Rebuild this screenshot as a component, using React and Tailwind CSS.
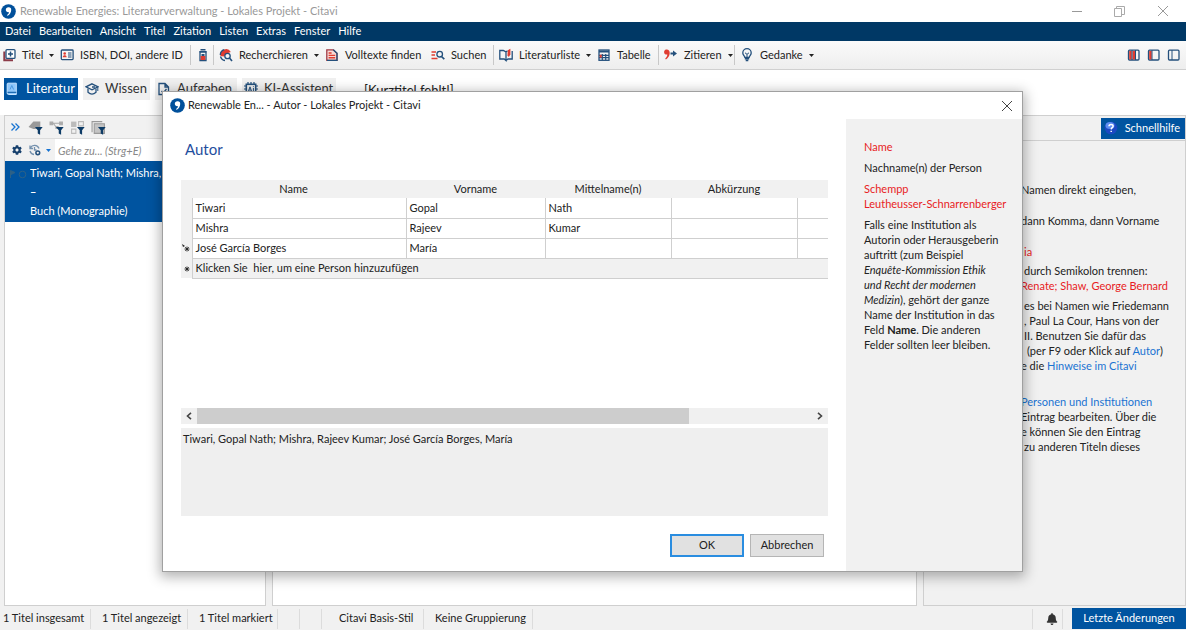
import React from "react";
import { FaBell, FaCog } from "react-icons/fa";

const NAVY = "#24507c";
const RED = "#e03c31";

const CitaviLogo = () => (
  <svg width="15" height="15" viewBox="0 0 15 15" aria-hidden="true">
    <circle cx="7.5" cy="7.5" r="7.3" fill="#00509b" />
    <path d="M7.4 3.2a2.6 2.6 0 0 1 2.8 2.7c0 2.6-1.5 4.8-3.8 5.9l-.5-.8c1.3-.8 2-1.6 2.2-2.8-1.9.4-3.3-.8-3.3-2.4 0-1.5 1.1-2.6 2.6-2.6z" fill="#fff" />
  </svg>
);

const Icon = ({ children, size = 14 }) => (
  <svg
    width={size}
    height={size}
    viewBox="0 0 14 14"
    fill="none"
    stroke={NAVY}
    strokeWidth="1.3"
    className="shrink-0"
    aria-hidden="true"
  >
    {children}
  </svg>
);

const AddTitleIcon = () => (
  <Icon>
    <path d="M2.3 3.5v8.7h8.7" stroke="#8c3b48" strokeWidth="2" />
    <rect x="4" y="1.6" width="9" height="8.8" rx="1" fill="#fff" />
    <path d="M8.5 3.5v5M6 6h5" strokeWidth="1.5" />
  </Icon>
);

const IdCardIcon = () => (
  <Icon>
    <rect x="1.3" y="2" width="11.8" height="9.6" rx="0.8" />
    <circle cx="4.7" cy="5.5" r="1.3" fill={RED} stroke="none" />
    <path d="M2.8 9.3c0-2.6 3.8-2.6 3.8 0z" fill={RED} stroke="none" />
    <path d="M8 5h3.5M8 7h3.5M8 9h3.5" strokeWidth="1.1" />
  </Icon>
);

const PickerIcon = () => (
  <Icon>
    <path d="M4.5 1.8h5M3.5 3.7h7" strokeWidth="1.6" />
    <path d="M4 4v8.5h6V4z" fill="#f4f4f4" />
    <path d="M4.7 8h4.6v4H4.7z" fill={RED} stroke="none" />
    <path d="M5.5 6h3v2h-3z" fill={NAVY} stroke="none" />
  </Icon>
);

const ResearchIcon = () => (
  <Icon>
    <path d="M1.5 8A5.6 5.6 0 0 1 11.8 4L8 5.5 5 8.5z" fill={RED} stroke="none" />
    <path d="M1.3 7a5.6 5.6 0 0 1 4-5.3M1.5 8.5a5.5 5.5 0 0 0 4.5 4" />
    <circle cx="8.5" cy="8" r="2.7" fill="#f4f4f4" />
    <path d="M10.5 10l2.5 3" strokeWidth="1.6" />
  </Icon>
);

const FullTextIcon = () => (
  <Icon>
    <path d="M1.8 1.8h6.5l3.7 3.5v7H1.8z" fill="#f7d9d6" stroke="#a03a44" />
    <path d="M8.3 1.8l3.7 3.5v7H2" />
    <path d="M3.6 5h3M3.6 7.4h6.6M3.6 9.8h6.6" stroke={RED} strokeWidth="1.4" />
  </Icon>
);

const SearchIcon = () => (
  <Icon>
    <path d="M.5 4h4.5M.5 7h3.5M.5 10.5h6" stroke={RED} />
    <circle cx="8.7" cy="6.2" r="2.8" />
    <path d="M10.5 8.5l2.8 2.7" strokeWidth="1.7" />
  </Icon>
);

const BookIcon = () => (
  <Icon>
    <path d="M.8 2.5h3.5L7 4v8.5L5.2 11H.8zM7 4l1.5-1.2M13.2 3v8H9L7 12.5" />
    <path d="M8.8 2.2l2.6-1.4v5.7L9.8 9 8.5 7.5z" fill={RED} stroke="none" />
  </Icon>
);

const TableIcon = () => (
  <Icon>
    <rect x="2" y="2" width="10" height="10.3" />
    <path d="M2 3.5h10" strokeWidth="2" />
    <path d="M2 7.3h10M2 9.7h10M5.3 6v6M8.7 6v6" strokeWidth="1.2" />
    <path d="M2.7 6.7h2v3h-2z" fill={RED} stroke="none" />
  </Icon>
);

const CiteIcon = () => (
  <Icon>
    <path d="M1.3 1.8c2.8-.8 4.6.8 4.4 3.4-.2 2.7-1.5 4.8-3.8 6.2l-.7-1C2.7 9.3 3.3 8 3.3 6.5 1.5 6.8.1 5.8.1 4.2c0-1.2.5-2 1.2-2.4z" fill={RED} stroke="none" />
    <path d="M6.5 5.5h4" strokeWidth="2" />
    <path d="M9 2.5l4 3-4 3z" fill={NAVY} stroke="none" />
  </Icon>
);

const IdeaIcon = () => (
  <Icon>
    <path d="M4.8 9.3C4.5 7.8 2.8 7 2.8 4.9a4.2 4.2 0 0 1 8.4 0c0 2.1-1.7 2.9-2 4.4z" />
    <path d="M5 4.8l2 1.5 2-1.5M7 6.3v3" strokeWidth="1" />
    <path d="M4.8 10.8h4.4M5.7 12.5h2.6" strokeWidth="1.5" />
  </Icon>
);

// fill: number of red columns on the left side of the layout preview
const LayoutIcon = ({ fill }) => (
  <Icon>
    <rect x="1.5" y="2.2" width="10.5" height="9.8" rx="1" />
    {fill > 0 && <path d="M2.2 2.9h2.5v8.5H2.2z" fill={RED} stroke="none" />}
    {fill > 1 && <path d="M5.5 2.9h2.5v8.5H5.5z" fill={RED} stroke="none" />}
    <path d="M5 2v10" strokeWidth="1" />
    {fill > 1 && <path d="M8.5 2v10" strokeWidth="1" />}
  </Icon>
);

const Funnel = () => (
  <path d="M6.5 6.5h7.2l-2.4 3v4.3l-2.2-1.3v-3z" fill="#0d3b66" stroke="none" />
);

const filterIcons = [
  {
    label: "Schlagwortfilter",
    art: <path d="M.5 6.5L5 1.5h6.5v7H5z" fill="#9a9a9a" stroke="none" />,
  },
  {
    label: "Kategorienfilter",
    art: (
      <g fill="#aaa" stroke="#aaa" strokeWidth="1">
        <path d="M1 2h2.5v2.5H1zM10 2h2.5v2.5H10zM6.5 6h2v2h-2z" />
        <path d="M3 3h7M4 3l3 4" fill="none" />
      </g>
    ),
  },
  {
    label: "Gruppenfilter",
    art: (
      <g stroke="#bbb" strokeWidth="1">
        <path d="M8 1.5h4.5v4H8zM1.5 8.5h4v4h-4z" />
        <path d="M1 1.5h5v5H1z" fill="#bbb" stroke="none" />
      </g>
    ),
  },
  {
    label: "Dokumentfilter",
    art: (
      <g stroke="#999" strokeWidth="1">
        <path d="M1 11.5V1.5h9.5" />
        <path d="M3 3.5h9.5v9H3z" fill="#c4c4c4" />
      </g>
    ),
  },
];

const LiteratureTabIcon = () => (
  <Icon>
    <path d="M3 1.2h7.3v11.3H2.5A1.4 1.4 0 0 1 1.2 11V2A.8.8 0 0 1 2 1.2z" fill="#8fc7fa" stroke="#c7e4ff" strokeWidth="1" />
    <path d="M1.5 10.3h8.8" stroke="#0054a0" strokeWidth="1" />
    <path d="M4 7.5l1.8-4 1.8 4" stroke="#4b9ae0" strokeWidth="1" />
  </Icon>
);

const KnowledgeIcon = () => (
  <Icon>
    <path d="M7 1.8l6 3-6 3-6-3z" />
    <path d="M3 6.5v3.8c2.5 2.2 5.5 2.2 8 0V6.5M7 5h3" />
    <path d="M12.8 5v4" strokeWidth="1" />
  </Icon>
);

const TaskIcon = () => (
  <Icon>
    <path d="M2 1.5h6l3.5 3.5v7.5H2zM8 1.5V5h3.5" />
    <path d="M4.5 9l1.8 1.8L9.5 7" />
  </Icon>
);

const AiIcon = () => (
  <Icon>
    <rect x="2.3" y="2.3" width="9.4" height="9.4" strokeWidth="1.6" />
    <path d="M4 0v2M7 0v2M10 0v2M0 4h2M0 7h2M0 10h2M12 4h2M12 7h2M12 10h2M4 12v2M7 12v2M10 12v2" strokeWidth="1.2" />
    <path d="M4.3 9.5L6 4.8l1.7 4.7M5 8h2M9.4 6v3.5M9.4 4.3v.8" strokeWidth="1" />
  </Icon>
);

const HistoryIcon = () => (
  <Icon>
    <path d="M2 2.5v3h3M2.3 5a4.8 4.8 0 0 1 8.7.5M2 8a4.8 4.8 0 0 0 4 3.5M6.5 4v3h2" stroke="#7390ad" />
    <circle cx="9.8" cy="9.8" r="1.9" stroke={NAVY} strokeWidth="1.5" />
  </Icon>
);

const HelpIcon = () => (
  <svg width="14" height="14" viewBox="0 0 14 14" aria-hidden="true">
    <circle cx="7" cy="7" r="6.3" fill="#1c49c2" />
    <ellipse cx="6" cy="4.5" rx="4.5" ry="3.5" fill="#5b8cf0" />
    <path d="M5 5.3C5 2.7 9.2 2.8 9.1 5.2 9 6.7 7.3 6.7 7.2 8.4M7.2 9.8v1.3" fill="none" stroke="#fff" strokeWidth="1.5" />
  </svg>
);

const CloseIcon = () => (
  <svg width="12" height="12" viewBox="0 0 12 12" aria-hidden="true">
    <path d="M1 1l10 10M11 1L1 11" stroke="currentColor" fill="none" />
  </svg>
);

const Caret = ({ color = "#222" }) => (
  <svg width="5" height="3" viewBox="0 0 5 3" className="shrink-0" aria-hidden="true">
    <path d="M0 0h5L2.5 3z" fill={color} />
  </svg>
);

const RowMarker = ({ editing }) => (
  <svg width="9" height="9" viewBox="0 0 9 9" className="mx-auto" aria-hidden="true">
    <path d="M5 2.5v5M2.5 5h5M3.2 3.2l3.6 3.6M6.8 3.2L3.2 6.8" stroke="#222" strokeWidth="0.9" />
    {editing && <path d="M0 0l3 2-2 1z" fill="#222" />}
  </svg>
);

const menus = ["Datei", "Bearbeiten", "Ansicht", "Titel", "Zitation", "Listen", "Extras", "Fenster", "Hilfe"];

const toolbar = [
  { label: "Titel", icon: AddTitleIcon, width: "w-[58px]", caret: true },
  { label: "ISBN, DOI, andere ID", icon: IdCardIcon, width: "w-[130px]" },
  { separator: true },
  { title: "Picker", icon: PickerIcon, width: "w-[17px]" },
  { separator: true },
  { label: "Recherchieren", icon: ResearchIcon, width: "w-[106px]", caret: true },
  { label: "Volltexte finden", icon: FullTextIcon, width: "w-[106px]" },
  { label: "Suchen", icon: SearchIcon, width: "w-[62px]" },
  { separator: true },
  { label: "Literaturliste", icon: BookIcon, width: "w-[98px]", caret: true },
  { label: "Tabelle", icon: TableIcon, width: "w-[61px]" },
  { separator: true },
  { label: "Zitieren", icon: CiteIcon, width: "w-[70px]", caret: true },
  { separator: true },
  { label: "Gedanke", icon: IdeaIcon, width: "w-[78px]", caret: true },
];

const tabs = [
  { label: "Literatur", icon: LiteratureTabIcon, width: "w-[74px]", active: true },
  { label: "Wissen", icon: KnowledgeIcon, width: "w-[67px]" },
  { label: "Aufgaben", icon: TaskIcon, width: "w-[82px]" },
  { label: "KI-Assistent", icon: AiIcon, width: "w-[94px]" },
];

const statusItems = [
  { label: "1 Titel insgesamt", width: "w-[91px] pl-[3px]" },
  { label: "1 Titel angezeigt", width: "w-[97px] pl-[11px]" },
  { label: "1 Titel markiert", width: "w-[90px] pl-[11px]" },
  { label: "", width: "w-[22px]" },
  { label: "", width: "w-[22px]" },
  { label: "Citavi Basis-Stil", width: "w-[102px] pl-[17px]" },
  { label: "Keine Gruppierung", width: "w-[109px] pl-[11px]" },
];

const persons = [
  { name: "Tiwari", first: "Gopal", middle: "Nath" },
  { name: "Mishra", first: "Rajeev", middle: "Kumar" },
  { name: "José García Borges", first: "María", middle: "", editing: true },
];

const TitleBar = () => (
  <header className="flex h-[22px] items-center gap-[4px] bg-white px-px text-[#999]">
    <CitaviLogo />
    <span className="text-[11px]">
      Renewable Energies: Literaturverwaltung - Lokales Projekt - Citavi
    </span>
    <div className="ml-auto flex items-center gap-8 pr-4">
      <button aria-label="Minimieren">
        <svg width="10" height="10" viewBox="0 0 10 10">
          <path d="M0 5.5h10" stroke="#999" />
        </svg>
      </button>
      <button aria-label="Verkleinern">
        <svg width="11" height="11" viewBox="0 0 11 11" fill="none" stroke="#aaa">
          <path d="M.5 2.5h7v8h-7zM2.5 2.5v-2h8v8h-3" />
        </svg>
      </button>
      <button aria-label="Schließen">
        <CloseIcon />
      </button>
    </div>
  </header>
);

const MenuBar = () => (
  <nav className="flex h-[19px] items-center gap-[8px] bg-[#003865] px-[5px] text-[11px] text-white">
    {menus.map((menu) => (
      <button key={menu}>{menu}</button>
    ))}
  </nav>
);

const Toolbar = () => (
  <div className="flex h-[29px] items-center border-b border-[#d0d0d0] bg-linear-to-b from-[#fafafa] to-[#eeeeee] pl-[2px] pr-[5px] text-[11px]">
    {toolbar.map((item, index) => {
      if (item.separator) {
        return <span key={index} className="mr-[5px] h-5 w-px bg-[#c8c8c8]" />;
      }
      const ItemIcon = item.icon;
      return (
        <button
          key={index}
          aria-label={item.label || item.title}
          className={`flex shrink-0 items-center gap-[6px] whitespace-nowrap ${item.width}`}
        >
          <ItemIcon />
          {item.label && <span>{item.label}</span>}
          {item.caret && <Caret />}
        </button>
      );
    })}
    <div className="ml-auto flex items-center gap-[6px]">
      {[2, 1, 0].map((fill) => (
        <button key={fill} aria-label={`Layout ${3 - fill}`}>
          <LayoutIcon fill={fill} />
        </button>
      ))}
    </div>
  </div>
);

const Workspaces = () => (
  <div className="flex h-[45px] items-start gap-[5px] bg-white pl-[4px] pt-[8px] text-[13px]">
    {tabs.map((tab) => {
      const TabIcon = tab.icon;
      return (
        <button
          key={tab.label}
          className={`flex h-[22px] shrink-0 items-center gap-[6px] whitespace-nowrap pl-[2px] ${tab.width} ${
            tab.active ? "bg-[#0054a0] text-white" : "bg-[#f0f0f0] text-[#333]"
          }`}
        >
          <TabIcon />
          {tab.label}
        </button>
      );
    })}
    <h1 className="pl-[23px] leading-6">[Kurztitel fehlt!]</h1>
  </div>
);

const TitleList = () => (
  <section className="w-[262px] shrink-0 border border-[#cfcfcf] bg-white">
    <div className="flex h-[23px] items-center gap-[6px] border-b border-[#dcdcdc] bg-[#f1f1f1] pl-[3px]">
      <button aria-label="Ausklappen">
        <Icon>
          <path d="M3.5 3.5L7 7l-3.5 3.5M7.5 3.5L11 7l-3.5 3.5" stroke="#1673d2" />
        </Icon>
      </button>
      {filterIcons.map((filter) => (
        <button key={filter.label} aria-label={filter.label}>
          <Icon size={15}>
            {filter.art}
            <Funnel />
          </Icon>
        </button>
      ))}
    </div>
    <div className="flex h-[22px] items-center bg-[#f1f1f1] pl-[7px]">
      <button aria-label="Einstellungen">
        <FaCog size={10} color="#17406d" />
      </button>
      <button aria-label="Verlauf" className="ml-[6px] flex items-center gap-[4px]">
        <HistoryIcon />
        <Caret color="#1673d2" />
      </button>
      <input
        aria-label="Gehe zu"
        placeholder="Gehe zu... (Strg+E)"
        className="ml-[4px] h-full min-w-0 flex-1 bg-white px-[3px] text-[11px] italic placeholder:text-[#888]"
      />
    </div>
    <div className="flex h-[61px] gap-[3px] bg-[#0054a0] pl-[5px] text-[11px] leading-[19px] text-white">
      <svg width="17" height="10" viewBox="0 0 17 10" className="mt-2 shrink-0" fill="none" stroke="#2c6187" aria-hidden="true">
        <path d="M.5 9V1.5L5 3.5l-4 2" fill="#2c6187" />
        <circle cx="12.5" cy="5.5" r="3.3" />
      </svg>
      <div className="overflow-hidden whitespace-nowrap pt-[2px]">
        <p>Tiwari, Gopal Nath; Mishra,</p>
        <p className="font-bold">–</p>
        <p>Buch (Monographie)</p>
      </div>
    </div>
  </section>
);

const HelpPanel = () => (
  <aside className="w-[263px] shrink-0 border border-[#cfcfcf] bg-[#f1f1f1]">
    <div className="flex h-[25px] items-center justify-end border-b border-[#cfcfcf]">
      <button className="flex h-[21px] items-center gap-[7px] bg-[#0054a0] pl-[3px] pr-[5px] text-[11px] text-white">
        <HelpIcon />
        Schnellhilfe
      </button>
    </div>
    <div className="flex flex-col gap-[4px] whitespace-nowrap pl-[97px] pt-[41px] text-[11px] leading-[15px]">
      <p className="pb-[12px]">Namen direkt eingeben,</p>
      <p className="pb-[12px]">dann Komma, dann Vorname</p>
      <p className="pl-[3px] text-[#e81c24]">ia</p>
      <div>
        <p className="pl-[3px]">durch Semikolon trennen:</p>
        <p className="text-[#e81c24]">Renate; Shaw, George Bernard</p>
      </div>
      <div className="pt-px pb-[17px]">
        <p className="pl-[3px]">es bei Namen wie Friedemann</p>
        <p className="pl-[3px]">, Paul La Cour, Hans von der</p>
        <p className="pl-[3px]">II. Benutzen Sie dafür das</p>
        <p className="pl-[6px]">
          (per F9 oder Klick auf{" "}
          <a href="#autor" className="text-[#1a73d1]">Autor</a>)
        </p>
        <p>
          e die <a href="#hinweise" className="text-[#1a73d1]">Hinweise im Citavi</a>
        </p>
      </div>
      <div>
        <p>
          <a href="#personen" className="text-[#1a73d1]">Personen und Institutionen</a>
        </p>
        <p>Eintrag bearbeiten. Über die</p>
        <p>e können Sie den Eintrag</p>
        <p className="pl-[3px]">zu anderen Titeln dieses</p>
      </div>
    </div>
  </aside>
);

const StatusBar = () => (
  <footer className="flex h-[23px] items-center bg-[#f1f1f1] text-[11px]">
    {statusItems.map((item, index) => (
      <span
        key={index}
        className={`flex h-5 shrink-0 items-center whitespace-nowrap border-r border-[#dcdcdc] ${item.width}`}
      >
        {item.label}
      </span>
    ))}
    <button
      aria-label="Benachrichtigungen"
      className="ml-auto mr-[9px] flex h-5 w-[31px] items-center justify-end border-x border-[#dcdcdc] pr-[4px]"
    >
      <FaBell size={12} color="#333" />
    </button>
    <button className="h-[21px] w-[114px] bg-[#0054a0] text-white">Letzte Änderungen</button>
  </footer>
);

const PersonTable = () => (
  <table className="w-full table-fixed border-collapse text-left text-[11px]">
    <colgroup>
      <col className="w-[11px]" />
      <col />
      <col className="w-[139px]" />
      <col className="w-[126px]" />
      <col className="w-[126px]" />
      <col className="w-[31px]" />
    </colgroup>
    <thead>
      <tr className="h-[18px] bg-[#f1f1f1] text-center">
        <th colSpan={2} className="font-normal">Name</th>
        <th className="font-normal">Vorname</th>
        <th className="font-normal">Mittelname(n)</th>
        <th className="font-normal">Abkürzung</th>
        <td />
      </tr>
    </thead>
    <tbody>
      {persons.map((person) => (
        <tr key={person.name} className="h-5">
          <td className="bg-[#f1f1f1]">{person.editing && <RowMarker editing />}</td>
          <td className="border border-t-0 border-[#cfcfcf] px-[3px]">{person.name}</td>
          <td className="border border-t-0 border-[#cfcfcf] px-[3px]">{person.first}</td>
          <td className="border border-t-0 border-[#cfcfcf] px-[3px]">{person.middle}</td>
          <td className="border border-t-0 border-[#cfcfcf]" />
          <td className="border-b border-[#cfcfcf]" />
        </tr>
      ))}
      <tr className="h-5 bg-[#f1f1f1]">
        <td><RowMarker /></td>
        <td colSpan={5} className="whitespace-pre border-b border-l border-[#cfcfcf] px-[3px]">
          {"Klicken Sie  hier, um eine Person hinzuzufügen"}
        </td>
      </tr>
    </tbody>
  </table>
);

const AuthorDialog = () => (
  <div
    role="dialog"
    aria-label="Autor"
    className="absolute bottom-[58px] left-[162px] right-[163px] top-[91px] flex min-h-[480px] flex-col border border-[#a0a0a0] bg-white shadow-[0_3px_12px_2px_rgba(0,0,0,0.3)]"
  >
    <div className="flex h-[27px] shrink-0 items-center gap-[3px] pl-[7px] pr-[9px] text-[11px]">
      <CitaviLogo />
      <span>Renewable En... - Autor - Lokales Projekt - Citavi</span>
      <button aria-label="Schließen" className="ml-auto text-[#444]">
        <CloseIcon />
      </button>
    </div>
    <div className="flex flex-1">
      <div className="flex min-w-0 flex-1 flex-col px-[18px] pb-[14px]">
        <h2 className="pb-[20px] pl-[4px] pt-[19px] text-[15px] leading-[22px] text-[#1f4e9e]">Autor</h2>
        <PersonTable />
        <div className="mt-auto flex h-4 items-center bg-[#f0f0f0]">
          <button aria-label="Nach links" className="flex w-4 justify-center">
            <svg width="6" height="8" viewBox="0 0 6 8" fill="none" stroke="#444" strokeWidth="1.6">
              <path d="M5 .8L1.5 4 5 7.2" />
            </svg>
          </button>
          <div className="h-full flex-1">
            <div className="h-full w-4/5 bg-[#cdcdcd]" />
          </div>
          <button aria-label="Nach rechts" className="flex w-4 justify-center">
            <svg width="6" height="8" viewBox="0 0 6 8" fill="none" stroke="#444" strokeWidth="1.6">
              <path d="M1 .8L4.5 4 1 7.2" />
            </svg>
          </button>
        </div>
        <textarea
          readOnly
          aria-label="Personen"
          value="Tiwari, Gopal Nath; Mishra, Rajeev Kumar; José García Borges, María"
          className="mt-[4px] h-[88px] resize-none bg-[#efefef] px-[2px] py-[3px] text-[11px] leading-[15px]"
        />
        <div className="mt-[18px] flex justify-end gap-[6px] pr-[4px] text-[11px]">
          <button className="h-[23px] w-[74px] border-2 border-[#2a8de0] bg-[#e1e1e1]">OK</button>
          <button className="h-[23px] w-[74px] border border-[#b5b5b5] bg-[#e1e1e1]">Abbrechen</button>
        </div>
      </div>
      <aside className="flex w-[176px] shrink-0 flex-col gap-[6px] whitespace-nowrap bg-[#f1f1f1] pl-[18px] pt-[20px] text-[11px] leading-[15px]">
        <p className="text-[#e81c24]">Name</p>
        <p>Nachname(n) der Person</p>
        <p className="text-[#e81c24]">
          Schempp
          <br />
          Leutheusser-Schnarrenberger
        </p>
        <p>
          Falls eine Institution als
          <br />
          Autorin oder Herausgeberin
          <br />
          auftritt (zum Beispiel
          <br />
          <em>
            Enquête-Kommission Ethik
            <br />
            und Recht der modernen
            <br />
            Medizin
          </em>
          ), gehört der ganze
          <br />
          Name der Institution in das
          <br />
          Feld <strong>Name</strong>. Die anderen
          <br />
          Felder sollten leer bleiben.
        </p>
      </aside>
    </div>
  </div>
);

const App = () => {
  return (
    <div className="relative flex min-h-screen flex-col overflow-hidden bg-[#f1f1f1] font-[Lato,'Open_Sans',sans-serif] text-[#222]">
      <TitleBar />
      <MenuBar />
      <Toolbar />
      <Workspaces />
      <main className="flex flex-1 gap-[6px] pb-px pl-[4px]">
        <TitleList />
        <section className="flex-1 border border-[#cfcfcf] bg-white" />
        <HelpPanel />
      </main>
      <StatusBar />
      <AuthorDialog />
    </div>
  );
};

export default App;
